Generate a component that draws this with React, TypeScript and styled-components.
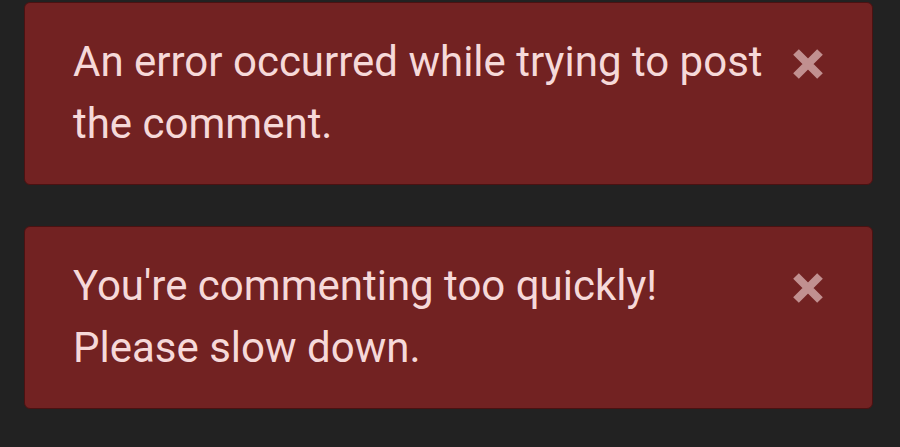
import React, { FC } from 'react';
import styled, { createGlobalStyle } from 'styled-components';

const GlobalStyle = createGlobalStyle`
    html, body {
        margin: 0;
        padding: 0;
        background: #222222;
    }
    body {
        font-family: Roboto, "Noto Sans", sans-serif;
    }
`;

const Page = styled.div`
    display: flex;
    flex-direction: column;
    gap: 41px;
    padding: 2px 27px 0 24px;
`;

const Alert = styled.div`
    display: flex;
    align-items: flex-start;
    justify-content: space-between;
    min-height: 183px;
    box-sizing: border-box;
    padding: 28px 48px 0 48px;
    background: #722222;
    border: 1px solid #4a1212;
    border-radius: 6px;
    color: #f6d9d9;
`;

const Message = styled.div`
    font-size: 42px;
    line-height: 62px;
    max-width: 700px;
`;

const CloseButton = styled.button`
    flex: none;
    margin-top: 17px;
    padding: 0;
    border: none;
    background: none;
    width: 32px;
    height: 32px;
    cursor: pointer;
    opacity: 0.6;
`;

const CloseIcon: FC = () => (
    <svg width="32" height="32" viewBox="0 0 32 32">
        <path d="M4 4 L28 28 M28 4 L4 28" stroke="#f6d9d9" strokeWidth="8" strokeLinecap="butt" />
    </svg>
);

type AlertProps = { text: React.ReactNode };

const ErrorAlert: FC<AlertProps> = ({ text }) => (
    <Alert>
        <Message>{text}</Message>
        <CloseButton aria-label="Close">
            <CloseIcon />
        </CloseButton>
    </Alert>
);

const App: FC = () => (
    <>
        <GlobalStyle />
        <Page>
            <ErrorAlert text="An error occurred while trying to post the comment." />
            <ErrorAlert text={<>You're commenting too quickly!<br />Please slow down.</>} />
        </Page>
    </>
);

export default App;
